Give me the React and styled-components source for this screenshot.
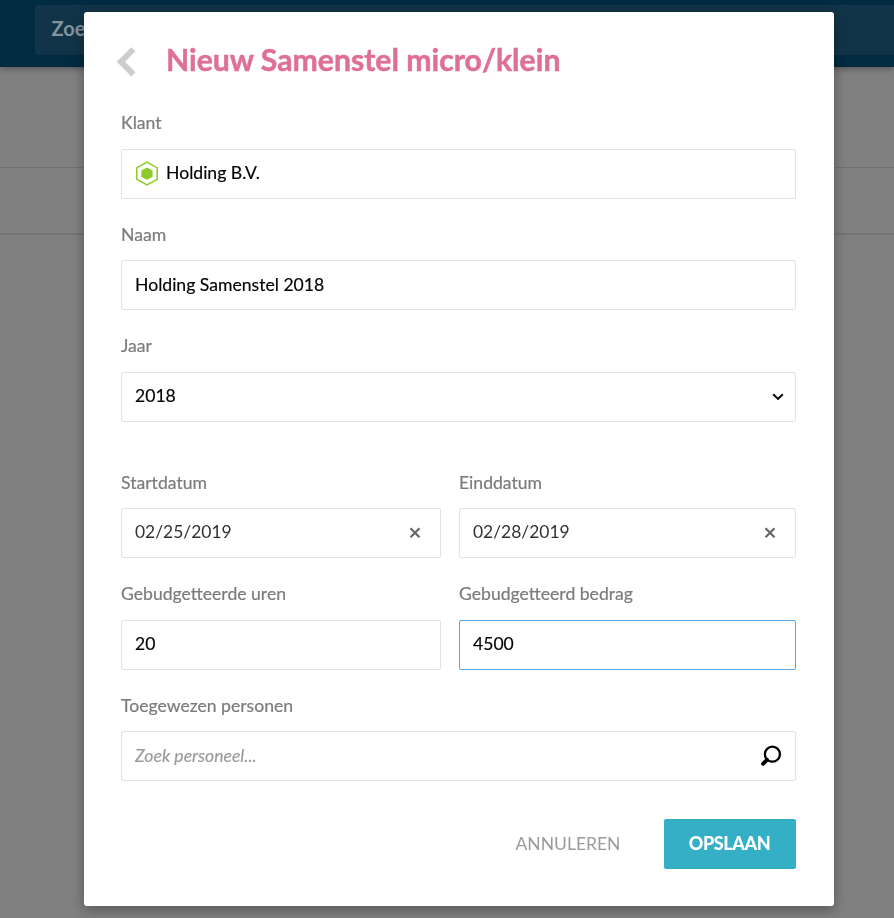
import React from "react";
import styled, { createGlobalStyle } from "styled-components";

const GlobalStyle = createGlobalStyle`
  *, *::before, *::after { box-sizing: border-box; }
  body { margin: 0; background: #808080; overflow: hidden; }
  body, input, button { font-family: Lato, "Open Sans", sans-serif; }
`;

const Page = styled.div`
  height: 918px;
  overflow: hidden;
  background: #808080;
`;

const TopBar = styled.header`
  height: 67px;
  padding: 5px 0 12px 35px;
  background: #002b41;
  box-shadow: 0 1px 7px rgba(0, 0, 0, 0.42);
  position: relative;
`;

const GlobalSearch = styled.div`
  height: 50px;
  padding-left: 16.5px;
  border-radius: 4px 0 0 4px;
  background: #123448;
  color: #84949e;
  font-size: 20px;
  font-weight: 700;
  line-height: 47px;
`;

const PageHeading = styled.div`
  height: 101px;
  border-bottom: 1px solid #717171;
`;

const PageTabs = styled.div`
  height: 67px;
  border-bottom: 2px solid #747474;
`;

const Overlay = styled.div`
  position: fixed;
  inset: 0;
  display: flex;
  justify-content: center;
  align-items: flex-start;
  padding: 12px 60px 12px 84px;
`;

const Dialog = styled.section`
  width: 750px;
  height: 894px;
  padding: 24px 38px 0 37px;
  border-radius: 3px;
  background: #fff;
  box-shadow: 0 4px 14px rgba(0, 0, 0, 0.32);
`;

const DialogHeader = styled.header`
  display: flex;
  align-items: center;
  height: 50px;
  margin-left: -4px;
  gap: 30px;
`;

const BackButton = styled.button`
  display: flex;
  padding: 2px 0 0;
  border: 0;
  background: none;
  color: #ccc;
`;

const Title = styled.h1`
  margin: 0;
  padding-bottom: 5px;
  color: #df7095;
  font-size: 30.2px;
  font-weight: 700;
  line-height: 48px;
  white-space: nowrap;
  -webkit-text-stroke: 0.5px currentColor;
`;

const Form = styled.form`
  padding-top: 13.4px;
`;

const FieldRow = styled.div`
  display: grid;
  grid-template-columns: ${(p) => (p.$split ? "320px 337px" : "1fr")};
  column-gap: 18px;
  margin-top: ${(p) => (p.$spaced ? "25px" : "0")};
`;

const Field = styled.label`
  display: block;
  height: 111.5px;
  padding-top: 11.05px;
`;

const FieldLabel = styled.span`
  display: block;
  height: 38.45px;
  color: #7b7b7b;
  font-size: 17.6px;
  line-height: 25px;
  white-space: nowrap;
  -webkit-text-stroke: 0.2px currentColor;
`;

const Control = styled.span`
  display: flex;
  align-items: center;
  height: 50px;
  padding: 0 ${(p) => p.$end || 13}px 0 13px;
  border: 1px solid ${(p) => (p.$focused ? "#56a5e2" : "#e2e2e2")};
  border-radius: 2px;
  background: #fff;
  color: #111;
`;

const Value = styled.input`
  flex: 1;
  min-width: 0;
  height: 46px;
  padding: 0 0 ${(p) => p.$lift ?? 2.9}px;
  border: 0;
  outline: 0;
  background: none;
  color: ${(p) => (p.$soft ? "#333" : "#000")};
  font-size: ${(p) => (p.$soft ? "17.45px" : "17.6px")};
  -webkit-text-stroke: ${(p) => (p.$soft ? "0" : "0.15px currentColor")};
  &::placeholder {
    color: #999;
    font-style: italic;
    opacity: 1;
  }
`;

const CompanyIcon = styled.svg`
  margin: 0 7.5px 0 -0.5px;
  flex: none;
`;

const Icon = styled.svg`
  flex: none;
  display: block;
`;

const Actions = styled.footer`
  display: flex;
  justify-content: flex-end;
  gap: 20px;
  margin-top: 26.1px;
`;

const Button = styled.button`
  height: 50px;
  width: ${(p) => (p.$primary ? "132px" : "152px")};
  padding: 0 ${(p) => (p.$primary ? "1px 3px 0" : "0 2px")};
  border: 0;
  border-radius: 2px;
  background: ${(p) => (p.$primary ? "#34afc6" : "transparent")};
  color: ${(p) => (p.$primary ? "#fff" : "#9b9b9b")};
  font-size: ${(p) => (p.$primary ? "18px" : "17.5px")};
  font-weight: ${(p) => (p.$primary ? 900 : 400)};
  letter-spacing: ${(p) => (p.$primary ? "-0.4px" : "0")};
`;

const ClearIcon = () => (
  <Icon width="12" height="12" viewBox="0 0 12 12">
    <path d="M1.5 1.2 10.5 10.2M10.5 1.2 1.5 10.2" stroke="#666" strokeWidth="2.2" fill="none" />
  </Icon>
);

export default function App() {
  return (
    <>
      <GlobalStyle />
      <Page>
        <TopBar>
          <GlobalSearch>Zoeken</GlobalSearch>
        </TopBar>
        <PageHeading />
        <PageTabs />
      </Page>
      <Overlay>
        <Dialog role="dialog" aria-labelledby="dialog-title">
          <DialogHeader>
            <BackButton type="button" aria-label="Terug">
              <svg width="19" height="30" viewBox="0 0 19 30">
                <path d="M16.4 2.2 3.9 14.8 16.4 27.4" stroke="currentColor" strokeWidth="5.8" fill="none" />
              </svg>
            </BackButton>
            <Title id="dialog-title">Nieuw Samenstel micro/klein</Title>
          </DialogHeader>
          <Form>
            <FieldRow>
              <Field>
                <FieldLabel>Klant</FieldLabel>
                <Control>
                  <CompanyIcon width="24" height="26" viewBox="0 0 24 26">
                    <path d="M12 1.2 22.2 6.9V18.3L12 24 1.8 18.3V6.9Z" fill="none" stroke="#8acb2a" strokeWidth="1.5" />
                    <path d="M12 6.4 17.6 9.5V15.7L12 18.8 6.4 15.7V9.5Z" fill="#8acb2a" />
                  </CompanyIcon>
                  <Value defaultValue="Holding B.V." />
                </Control>
              </Field>
            </FieldRow>
            <FieldRow>
              <Field>
                <FieldLabel>Naam</FieldLabel>
                <Control><Value $lift={1.8} defaultValue="Holding Samenstel 2018" /></Control>
              </Field>
            </FieldRow>
            <FieldRow>
              <Field>
                <FieldLabel>Jaar</FieldLabel>
                <Control $end={11}>
                  <Value defaultValue="2018" />
                  <Icon width="12" height="8" viewBox="0 0 12 8">
                    <path d="M1.2 1.3 6 6 10.8 1.3" stroke="#000" strokeWidth="1.9" fill="none" />
                  </Icon>
                </Control>
              </Field>
            </FieldRow>
            <FieldRow $split $spaced>
              <Field>
                <FieldLabel>Startdatum</FieldLabel>
                <Control $end={19}><Value $soft $lift={4} defaultValue="02/25/2019" /><ClearIcon /></Control>
              </Field>
              <Field>
                <FieldLabel>Einddatum</FieldLabel>
                <Control $end={19}><Value $soft $lift={4} defaultValue="02/28/2019" /><ClearIcon /></Control>
              </Field>
            </FieldRow>
            <FieldRow $split>
              <Field>
                <FieldLabel>Gebudgetteerde uren</FieldLabel>
                <Control><Value defaultValue="20" /></Control>
              </Field>
              <Field>
                <FieldLabel>Gebudgetteerd bedrag</FieldLabel>
                <Control $focused><Value defaultValue="4500" /></Control>
              </Field>
            </FieldRow>
            <FieldRow>
              <Field>
                <FieldLabel>Toegewezen personen</FieldLabel>
                <Control>
                  <Value $lift={1.8} placeholder="Zoek personeel..." />
                  <Icon width="22" height="22" viewBox="0 0 22 22">
                    <circle cx="12.4" cy="9.2" r="7.5" fill="none" stroke="#000" strokeWidth="2.3" />
                    <path d="M7 14.8 3 18.8" stroke="#000" strokeWidth="3.8" strokeLinecap="round" />
                  </Icon>
                </Control>
              </Field>
            </FieldRow>
            <Actions>
              <Button type="button">ANNULEREN</Button>
              <Button type="button" $primary>OPSLAAN</Button>
            </Actions>
          </Form>
        </Dialog>
      </Overlay>
    </>
  );
}
